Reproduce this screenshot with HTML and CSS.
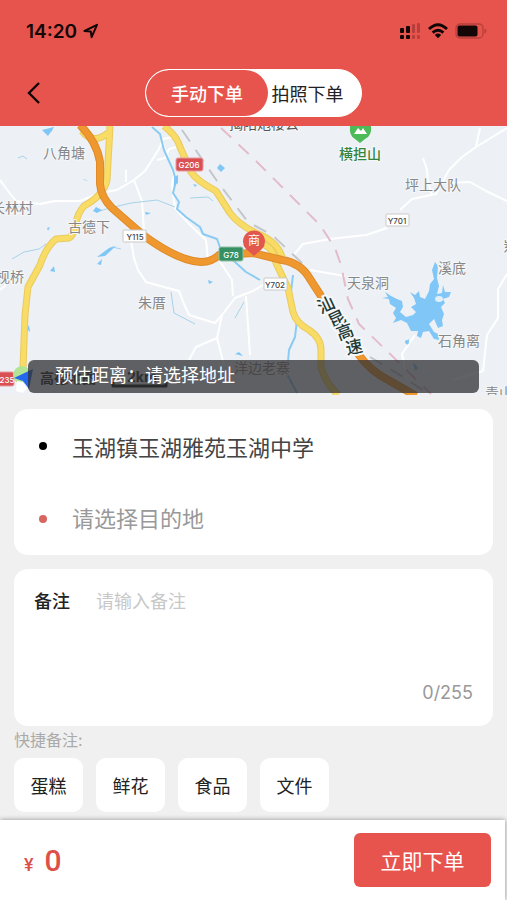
FILE: index.html
```
<!DOCTYPE html>
<html lang="zh-CN">
<head>
    <meta charset="UTF-8">
    <meta name="viewport" content="width=device-width, initial-scale=1.0">
    <title>手动下单</title>
    <link rel="stylesheet" href="styles.css">
</head>
<body>
    <header class="header">
        <div class="status-bar">
            <div class="status-left">
                <span>14:20</span>
                <svg width="16" height="16" viewBox="0 0 16 16"><path d="M1.5 8 L14 1.8 L8.6 14.2 L7.8 8.5 Z" fill="none" stroke="#120606" stroke-width="2" stroke-linejoin="round"/></svg>
            </div>
            <div class="status-right">
                <svg width="21" height="16" viewBox="0 0 21 16">
                    <g fill="#120606">
                        <rect x="0" y="5" width="4" height="5" rx="1"/><rect x="6" y="3" width="4" height="7" rx="1"/>
                        <rect x="0" y="12" width="4" height="4" rx="1"/><rect x="6" y="12" width="4" height="4" rx="1"/>
                    </g>
                    <g fill="#b63f3b">
                        <rect x="12" y="1" width="3" height="9" rx="1"/><rect x="17" y="0" width="3" height="10" rx="1"/>
                        <rect x="12" y="12" width="3" height="4" rx="1"/><rect x="17" y="12" width="3" height="4" rx="1"/>
                    </g>
                </svg>
                <svg width="20" height="16" viewBox="0 0 20 16">
                    <g fill="none" stroke="#120606" stroke-width="2.8">
                        <path d="M1 6 Q10 -2.6 19 6"/><path d="M4.6 9.6 Q10 4.8 15.4 9.6"/>
                    </g>
                    <path d="M6.8 12 Q10 9.2 13.2 12 L10 15.2 Z" fill="#120606"/>
                </svg>
                <svg width="32" height="16" viewBox="0 0 32 16">
                    <rect x="1" y="1" width="27" height="14" rx="4" fill="none" stroke="#b63f3b" stroke-width="1.3"/>
                    <rect x="2.5" y="2.5" width="20" height="11" rx="2" fill="#120606"/>
                    <path d="M29.5 5.5 Q31.5 6 31.5 8 Q31.5 10 29.5 10.5 Z" fill="#b63f3b"/>
                </svg>
            </div>
        </div>
        <nav class="nav">
            <button class="back" aria-label="返回">
                <svg width="16" height="22" viewBox="0 0 16 22"><path d="M14 1 L4 11 L14 21" fill="none" stroke="#120606" stroke-width="2.4"/></svg>
            </button>
            <div class="tabs">
                <button class="tab active">手动下单</button>
                <button class="tab">拍照下单</button>
            </div>
        </nav>
    </header>

    <div class="map">
        <svg class="map-canvas" viewBox="0 126 507 269" preserveAspectRatio="xMidYMid slice">
            <!-- small roads -->
            <g class="road-small">
                <path d="M0 180 L8 191 L16 201 L40 204 L55 201 L80 201 L100 193 L117 190 L134 180 L145 171 L159 149 L163 139 L174 137"/>
                <path d="M0 290 L5 286 L6 274 M126 170 V182 M134 180 L142 201 L144 232 M131 240 L134 258 L138 270 L146 282 L164 287 L179 291 L184 304 L189 315 L215 323 L222 315 L235 298 L253 291"/>
                <path d="M157 160 L165 158 L169 149 L177 147 M161 138 L174 175 L172 185 L175 208 L190 225 L206 240 L208 260 M219 260 L232 280 L233 296 M246 296 L250 355 M222 315 L217 338 L196 347 L189 360 M217 338 L224 365"/>
                <path d="M293 256 L303 244 L330 239 L366 235 L387 228 M400 210 L412 199 L436 194 L449 170 L462 157 L476 147 L480 128 M476 147 L507 128 M449 183 L470 182 L486 191 L507 201"/>
                <path d="M432 195 L428 182 L427 170 L423 158 M310 270 L345 276 M507 274 L498 289 L498 318 L487 335 L483 371 M415 335 L402 354 L405 370 M452 380 L483 371 M253 291 L265 284"/>
            </g>
            <!-- rivers -->
            <g class="river">
                <path d="M152 127 L160 134 L164 150 L173 170 L176 181 L173 193 L179 202 L177 209 L186 217 L200 227 L203 234 L217 239 L221 250 L235 262 L246 272 L260 280"/>
                <path d="M293 275 L290 300 L297 320 L295 337 L289 350 L287 374 L297 393"/>
                <path class="stream" d="M96 212 L110 208 L131 203 L157 200 L175 207 M12 259 L24 252 L39 249 L46 244 M190 198 L208 197 L213 201 M103 255 L112 247 L121 249 M171 292 L174 313 L195 324 M235 318 L244 302 M45 130 L51 132 L53 127 M18 158 L23 156 L27 159"/>
            </g>
            <g class="water">
                <path d="M42 130 L54 127 L48 136 Z M93 211 L96 207 L102 210 L97 213 Z M174 177 L178 175 L178 183 L174 186 Z M217 168 L220 164 L225 168 L221 172 Z M83 179 L89 181 L84 180 Z M50 271 L54 266 L55 272 Z M97 264 L102 259 L101 265 Z M27 329 L29 325 L30 332 Z M145 212 L151 213 L146 215 Z M208 280 L213 282 L209 284 Z M235 354 L239 352 L243 356 Z M97 257 L109 248 L116 246 L105 256 Z M193 184 L197 185 L195 187 Z M47 228 L50 227 L48 231 Z M405 342 L409 339 L408 345 Z M413 362 L418 368 L415 371 Z"/>
                <!-- reservoir -->
                <path d="M435 262 L438 266 L437 278 L439 286 L437 294 L442 293 L443 285 L445 292 L451 292 L449 297 L443 299 L445 303 L441 307 L444 314 L442 320 L443 326 L438 328 L434 319 L429 324 L434 332 L438 334 L439 340 L434 339 L429 331 L423 332 L421 338 L417 336 L418 331 L411 331 L407 323 L401 320 L393 323 L396 318 L393 313 L396 308 L390 304 L389 299 L382 298 L388 297 L385 292 L391 296 L397 299 L402 301 L403 307 L400 312 L406 317 L413 315 L416 312 L411 307 L416 304 L414 298 L410 292 L415 295 L419 291 L420 297 L425 299 L429 291 L430 284 L434 279 L432 270 Z"/>
                <circle cx="407" cy="342" r="2"/>
            </g>
            <ellipse cx="439" cy="299" rx="4" ry="3" fill="#e3eff7"/>
            <!-- railways -->
            <path class="rail rail-gray" d="M182 130 L217 181 L248 222 L272 235 L301 262 L323 295"/>
            <path class="rail rail-gray" d="M370 357 L400 375 L430 395"/>
            <path class="rail rail-pink" d="M221 128 L253 158 L290 195 L320 225 L335 248 L341 265 L348 299 L359 324 L387 351 L431 394"/>
            <!-- highways -->
            <g class="road-yellow-edge">
                <path id="y1" d="M110 126 L109 145 L107 180 Q104 195 84 206 Q77 214 76 224 Q74 235 69 238 L56 239 Q46 247 40 265 L28 287 L25 315 L23 368 M82 131 Q93 145 108 133"/>
                <path id="y2" d="M164 126 Q177 136 180 147 L191 172 Q197 181 216 191 L230 213 Q238 224 256 233 Q277 241 282 257 M252 245 Q272 240 276 263 L288 288 L293 312 Q296 323 309 330 Q321 338 321 350 L321 367 Q325 382 338 395"/>
            </g>
            <g class="road-yellow"><use href="#y1"/><use href="#y2"/></g>
            <path class="road-orange-edge" d="M80 125 Q97 142 100 162 L100 184 Q101 197 112 208 L143 235 Q178 261 201 262 Q212 262 219 255 L253 253 L282 260 Q301 263 310 279 L334 316 L359 355 Q370 371 390 381 L416 396"/>
            <path class="road-orange" d="M80 125 Q97 142 100 162 L100 184 Q101 197 112 208 L143 235 Q178 261 201 262 Q212 262 219 255 L253 253 L282 260 Q301 263 310 279 L334 316 L359 355 Q370 371 390 381 L416 396"/>
            <!-- place names -->
            <g class="place">
                <text x="43" y="158">八角塘</text>
                <text x="-9" y="213">长林村</text>
                <text x="68" y="232">古德下</text>
                <text x="-18" y="282">大枧桥</text>
                <text x="138" y="308">朱厝</text>
                <text x="405" y="190">坪上大队</text>
                <text x="347" y="288">天泉洞</text>
                <text x="438" y="273">溪底</text>
                <text x="438" y="346">石角离</text>
                <text x="234" y="373">洋边老寨</text>
                <text x="485" y="398">青山</text>
                <text x="503" y="251">岽</text>
            </g>
            <text class="place place-dark" x="229" y="129">揭阳炮楼公</text>
            <g class="highway-name">
                <text x="326" y="311" transform="rotate(-25 326 305)">汕</text>
                <text x="337" y="325" transform="rotate(-25 337 319)">昆</text>
                <text x="345" y="338" transform="rotate(-20 345 332)">高</text>
                <text x="354" y="353" transform="rotate(-12 354 347)">速</text>
            </g>
            <!-- road numbers -->
            <g class="shield">
                <rect x="123" y="230" width="23" height="12" rx="1"/><text x="135" y="240">Y115</text>
                <rect x="386" y="214" width="23" height="12" rx="1"/><text x="397" y="224">Y701</text>
                <rect x="264" y="278" width="23" height="12" rx="1"/><text x="275" y="288">Y702</text>
            </g>
            <g class="shield shield-red">
                <rect x="176" y="158" width="27" height="13" rx="2"/><text x="189" y="168">G206</text>
                <rect x="-10" y="372" width="24" height="14" rx="2"/><text x="4" y="383">G235</text>
            </g>
            <g class="shield shield-green">
                <rect x="219" y="247" width="24" height="14" rx="2"/><text x="231" y="258">G78</text>
            </g>
            <!-- mountain -->
            <path d="M350 126 H371 Q372 136 365 139 L360 143 L355 139 Q349 136 350 126 Z" fill="#4dbb5a"/>
            <path d="M354 134 L358 128 L361 131 L363 128 L367 134 Z" fill="#fff"/>
            <text class="mountain" x="339" y="159">横担山</text>
            <!-- shop marker -->
            <path d="M254 256 L246 249 A11 11 0 1 1 262 249 Z" fill="#e2584d"/>
            <text class="marker" x="254" y="245">商</text>
            <!-- scale and logo -->
            <circle cx="22" cy="375" r="9" fill="#b2e495"/>
            <path d="M17 381 L23 382 L27 388 L23 393 L16 391 Z" fill="#fff"/>
            <path d="M14 378 L33 369 L29 389 L23 381 Z" fill="#2468ed"/>
            <text class="logo" x="40" y="383">高德地图</text>
            <text class="scale" x="127" y="382">2km</text>
            <path d="M113 382 V386 H166 V382" fill="none" stroke="#111" stroke-width="3"/>
        </svg>
        <div class="distance">预估距离：请选择地址</div>
    </div>

    <main class="content">
        <section class="card address">
            <div class="address-row">
                <span class="dot"></span>
                <input type="text" value="玉湖镇玉湖雅苑玉湖中学" aria-label="取货地址" readonly>
            </div>
            <div class="address-row">
                <span class="dot dot-red"></span>
                <input type="text" placeholder="请选择目的地" aria-label="目的地" readonly>
            </div>
        </section>

        <section class="card remark">
            <div class="remark-row">
                <label for="remark">备注</label>
                <textarea id="remark" maxlength="255" placeholder="请输入备注"></textarea>
            </div>
            <div class="counter">0/255</div>
        </section>

        <div class="quick-title">快捷备注:</div>
        <div class="quick-list">
            <button class="quick">蛋糕</button>
            <button class="quick">鲜花</button>
            <button class="quick">食品</button>
            <button class="quick">文件</button>
        </div>
    </main>

    <footer class="footer">
        <div class="price"><span class="yen">¥</span>0</div>
        <button class="submit">立即下单</button>
    </footer>
</body>
</html>
```
FILE: styles.css
```
* {
    box-sizing: border-box;
}

body {
    margin: 0;
    min-height: 100vh;
    display: flex;
    flex-direction: column;
    background: #f0f0f0;
    color: #222;
    font-family: Inter, "Noto Sans CJK SC", sans-serif;
    font-size: 18px;
}

button,
input,
textarea {
    font-family: inherit;
    font-size: inherit;
    color: inherit;
    border: none;
    padding: 0;
    margin: 0;
    outline: none;
}

button {
    cursor: pointer;
}

svg {
    display: block;
}

/* header */
.header {
    background: #e7544d;
    height: 126px;
    padding-top: 16px;
}

.status-bar {
    display: flex;
    justify-content: space-between;
    align-items: center;
    height: 30px;
    padding: 0 20px 0 26px;
}

.status-left {
    display: flex;
    align-items: center;
    gap: 6px;
    color: #120606;
    font-size: 19px;
    font-weight: 600;
}

.status-right {
    display: flex;
    align-items: center;
    gap: 7px;
}

.nav {
    display: grid;
    grid-template-columns: 1fr auto 1fr;
    align-items: center;
    margin-top: 23px;
}

.back {
    justify-self: start;
    margin-left: 25px;
    background: none;
}

.tabs {
    display: flex;
    width: 217px;
    height: 48px;
    border: 1px solid #fff;
    border-radius: 24px;
    background: #fff;
    overflow: hidden;
}

.tab {
    flex: 1;
    background: none;
    padding-right: 14px;
    font-size: 18px;
}

.tab.active {
    flex: none;
    width: 122px;
    padding: 0;
    border-radius: 23px;
    background: #e7544d;
    color: #fff;
    font-weight: 500;
}

/* map */
.map {
    position: relative;
    height: 269px;
    background: #edf1f5;
    overflow: hidden;
}

.map-canvas {
    width: 100%;
    height: 100%;
}

.map-canvas path {
    stroke-linejoin: round;
}

.road-small {
    fill: none;
    stroke: #fff;
    stroke-width: 2;
}

.river {
    fill: none;
    stroke: #8acbf3;
    stroke-width: 2;
}

.stream {
    stroke: #a6d3ea;
    stroke-width: 1;
}

.water {
    fill: #80c7f8;
}

.rail {
    fill: none;
    stroke-width: 2;
    stroke-dasharray: 14 10;
}

.rail-gray {
    stroke: #c4c6cc;
}

.rail-pink {
    stroke: #e3bccb;
}

.road-yellow-edge {
    fill: none;
    stroke: #e8ca60;
    stroke-width: 7;
}

.road-yellow {
    fill: none;
    stroke: #f8dc65;
    stroke-width: 5;
}

.road-orange-edge {
    fill: none;
    stroke: #e08a28;
    stroke-width: 8;
}

.road-orange {
    fill: none;
    stroke: #ee982f;
    stroke-width: 6;
}

.place,
.mountain,
.highway-name {
    font-size: 14px;
    fill: #858789;
    stroke: #f5f7f9;
    stroke-width: 2px;
    paint-order: stroke;
}

.place-dark {
    fill: #555;
}

.mountain {
    fill: #35843f;
    font-weight: 500;
}

.highway-name {
    font-size: 17px;
    font-weight: 500;
    fill: #1f3a35;
    stroke-width: 4px;
    text-anchor: middle;
}

.shield {
    fill: #fff;
    stroke: #c9c9c9;
    stroke-width: 1px;
}

.shield text {
    fill: #444;
    stroke: none;
    font-size: 8px;
    font-weight: 500;
    text-anchor: middle;
}

.shield-red {
    fill: #d84f54;
    stroke: #e89a9c;
}

.shield-green {
    fill: #369064;
    stroke: #8dbfa5;
}

.shield-red text,
.shield-green text {
    fill: #fff;
}

.marker {
    fill: #fff;
    font-size: 12px;
    text-anchor: middle;
}

.logo,
.scale {
    font-size: 14px;
    font-weight: 700;
    fill: #222;
}

.distance {
    position: absolute;
    left: 28px;
    right: 28px;
    bottom: 2px;
    height: 33px;
    padding-left: 27px;
    border-radius: 6px;
    background: rgba(50, 50, 52, 0.76);
    color: #fff;
    font-size: 18px;
    line-height: 32px;
}

/* form cards */
.content {
    padding: 14px 14px 8px;
}

.card {
    background: #fff;
    border-radius: 14px;
    margin-bottom: 14px;
}

.address-row {
    display: flex;
    align-items: center;
    gap: 25px;
    height: 73px;
    padding: 0 25px;
}

.address-row input {
    flex: 1;
    min-width: 0;
    background: none;
    color: #444;
    font-size: 22px;
}

.address-row input::placeholder {
    color: #999;
    opacity: 1;
}

.dot {
    width: 8px;
    height: 8px;
    border-radius: 50%;
    background: #000;
}

.dot-red {
    background: #d66660;
}

.remark {
    padding: 20px;
    margin-bottom: 0;
}

.remark-row {
    display: flex;
    gap: 26px;
    line-height: 26px;
}

.remark-row label {
    font-weight: 500;
}

.remark-row textarea {
    flex: 1;
    height: 90px;
    background: none;
    line-height: 26px;
    resize: none;
}

.remark-row textarea::placeholder {
    color: #c8c8c8;
    opacity: 1;
}

.counter {
    height: 27px;
    color: #999;
    line-height: 27px;
    text-align: right;
}

.quick-title {
    color: #aaa;
    font-size: 16px;
    line-height: 28px;
    margin-bottom: 4px;
}

.quick-list {
    display: flex;
    flex-wrap: wrap;
    gap: 13px;
}

.quick {
    width: 69px;
    height: 54px;
    border-radius: 10px;
    background: #fff;
}

/* bottom bar */
.footer {
    display: flex;
    justify-content: space-between;
    align-items: center;
    height: 80px;
    margin-top: auto;
    margin-right: 2px;
    padding: 0 14px 0 24px;
    background: #fff;
    box-shadow: 0 0 5px rgba(0, 0, 0, 0.4);
}

.price {
    color: #dc5149;
    font-family: Roboto, sans-serif;
    font-size: 30px;
    font-weight: 500;
}

.yen {
    margin-right: 11px;
    font-size: 18px;
}

.submit {
    width: 137px;
    height: 54px;
    border-radius: 6px;
    background: #e7544d;
    color: #fff;
    font-size: 21px;
}
```
